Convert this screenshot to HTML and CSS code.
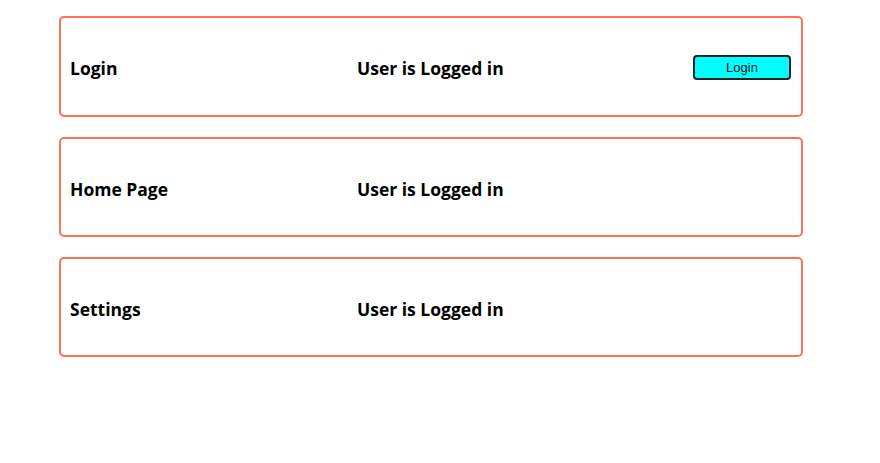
FILE: index.html
```html
<!DOCTYPE html>
<html lang="en">
<head>
<meta charset="UTF-8" />
<title>Login status</title>
<link rel="stylesheet" href="styles.css">
</head>
<body>
<div class="container">
    <div class="card">
        <h3 class="card-title">Login</h3>
        <h3 class="card-status">User is Logged in</h3>
        <button class="login-btn">Login</button>
    </div>
    <div class="card">
        <h3 class="card-title">Home Page</h3>
        <h3 class="card-status">User is Logged in</h3>
    </div>
    <div class="card">
        <h3 class="card-title">Settings</h3>
        <h3 class="card-status">User is Logged in</h3>
    </div>
</div>
</body>
</html>
```

FILE: styles.css
```css
body {
    margin: 0;
    font-family: "Open Sans", sans-serif;
    background: white;
    color: #000;
}
.container {
    width: 744px;
    padding: 16px 0 0 59px;
    display: flex;
    flex-direction: column;
    gap: 20px;
}
.card {
    height: 101px;
    box-sizing: border-box;
    border: 2px solid #ff6f59;
    border-radius: 5px;
    padding: 0 10px 0 9px;
    display: grid;
    grid-template-columns: 287px 1fr auto;
    align-items: center;
}
.card + .card {
    height: 100px;
}
.card-title, .card-status {
    margin: 0;
    padding-top: 3px;
    font-size: 17.5px;
    font-weight: bold;
}
.login-btn {
    width: 98px;
    height: 25px;
    margin-top: 2px;
    background: #00ffff;
    border: 2px solid #222;
    border-radius: 4px;
    font-family: "Liberation Sans", Arial, sans-serif;
    font-size: 13px;
    color: #111;
    cursor: pointer;
}
```
